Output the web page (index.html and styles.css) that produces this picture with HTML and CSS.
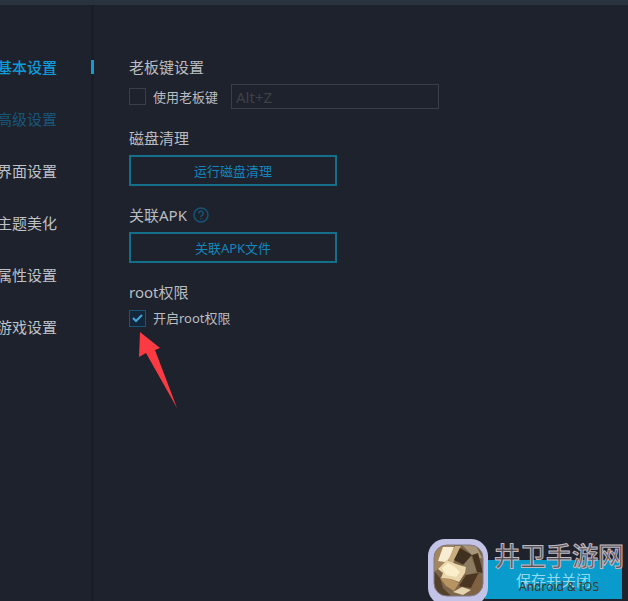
FILE: index.html
```html
<!DOCTYPE html>
<html lang="zh-CN">
<head>
<meta charset="utf-8">
<title>基本设置</title>
<link rel="stylesheet" href="styles.css">
</head>
<body>
<header class="titlebar"></header>
<div class="window">
  <nav class="sidebar">
    <a class="item active" href="#basic">基本设置</a>
    <a class="item hover" href="#advanced">高级设置</a>
    <a class="item" href="#interface">界面设置</a>
    <a class="item" href="#theme">主题美化</a>
    <a class="item" href="#property">属性设置</a>
    <a class="item" href="#game">游戏设置</a>
  </nav>
  <main class="content">
    <section class="group">
      <h2>老板键设置</h2>
      <div class="row">
        <input class="check" type="checkbox" id="boss">
        <label for="boss">使用老板键</label>
        <input class="hotkey" type="text" placeholder="Alt+Z" aria-label="老板键">
      </div>
    </section>
    <section class="group">
      <h2>磁盘清理</h2>
      <button class="action" type="button">运行磁盘清理</button>
    </section>
    <section class="group">
      <h2>关联APK
        <svg class="help" viewBox="0 0 16 16" aria-hidden="true"><circle cx="8" cy="8" r="7"/><path d="M5.8 6.4a2.2 2.2 0 1 1 3.5 1.7Q8 9 8 10M8 11.3v1.1"/></svg>
      </h2>
      <button class="action" type="button">关联APK文件</button>
    </section>
    <section class="group">
      <h2>root权限</h2>
      <div class="row">
        <input class="check" type="checkbox" id="root" checked>
        <label for="root">开启root权限</label>
        <svg class="arrow" viewBox="0 0 38 76" aria-hidden="true"><path d="M1 0 21 16 16 18 38 76 7 21 0 25Z"/></svg>
      </div>
    </section>
    <footer class="footer"><button class="save" type="button">保存并关闭</button></footer>
  </main>
</div>
<aside class="watermark">
  <svg class="gem" viewBox="0 0 60 62" aria-hidden="true">
    <defs><clipPath id="face"><rect x="6" y="6" width="49" height="51" rx="13"/></clipPath></defs>
    <rect x="0" y="0" width="60" height="66" rx="17" fill="#c3c3e8"/>
    <g clip-path="url(#face)">
      <path fill="#7c6548" d="M0 0h60v62H0z"/>
      <path fill="#a5855c" d="M5 4h22l-7 18-9 7-6 5z"/>
      <path fill="#f7ecd2" d="M15 8h11l-4 11-5 4-7-1z"/>
      <path fill="#c9ad7e" d="m27 7 6 0-8 17-5-3z"/>
      <path fill="#40301f" d="m32 9 12 7-8 10-10-5z"/>
      <path fill="#a8967a" d="M33 5h14l8 15-11-4z"/>
      <path fill="#8c7a61" d="m43 17 6 16-11 3-3-10z"/>
      <path fill="#46331f" d="m44 16 6-2 5 20-6-1z"/>
      <path fill="#4a3520" d="m38 36 13-2-8 15-12-2z"/>
      <path fill="#54402a" d="m6 32 6 7 3 10 8 8H6z"/>
      <path fill="#b79461" d="m12 39 11 1 8 4-5 8-8-5z"/>
      <path fill="#e9d6ab" d="m10 30 9-9 9 4 10 3-1 6-6 9-8-3-10-1 2-5z"/>
      <path fill="#fbeecb" d="m14 29 6-5 7 4 5 5-4 5-10-2z"/>
      <path fill="#e4d3ad" d="m25 53 9-5 9 3-8 5z"/>
      <path fill="#806141" d="m43 49 7-14 5 3v16l-10 2z"/>
    </g>
    <rect x="6" y="6" width="49" height="51" rx="13" fill="none" stroke="#827b82"/>
  </svg>
  <div class="brand"><strong>井卫手游网</strong><span>Android &amp; IOS</span></div>
</aside>
</body>
</html>
```

FILE: styles.css
```css
* { box-sizing: border-box; }
body {
  display: flex;
  flex-direction: column;
  min-height: 100vh;
  margin: 0;
  overflow: hidden;
  position: relative;
  background: #1e222c;
  color: #b9bcc1;
  font: 13px/18px "Noto Sans", "Noto Sans CJK SC", sans-serif;
}
button, input { font: inherit; }
.titlebar { height: 5px; background: #29333e; }
.window { display: flex; flex: 1; }
.sidebar {
  display: flex;
  flex-direction: column;
  gap: 32px;
  width: 94px;
  padding-top: 52px;
  border-right: 3px solid #191d26;
}
.item {
  margin: 0 -3px;
  color: #bec1c6;
  font-size: 15px;
  line-height: 20px;
  text-decoration: none;
  white-space: nowrap;
}
.item.active {
  background: linear-gradient(#159bd3, #159bd3) right center / 3px 14px no-repeat;
  color: #0e9bd9;
  font-weight: 500;
}
.item.hover { color: #17577b; }
.content {
  display: flex;
  flex: 1;
  flex-direction: column;
  gap: 19px;
  padding: 52px 6px 2px 35px;
}
.group { display: grid; justify-items: start; gap: 7px; }
h2 {
  display: flex;
  align-items: center;
  gap: 6px;
  margin: 0;
  font-size: 15px;
  font-weight: 400;
  line-height: 20px;
}
.row { display: flex; align-items: center; position: relative; }
.check {
  appearance: none;
  width: 17px;
  height: 17px;
  margin: 0 7px 0 0;
  border: 1px solid #3a3e46;
}
.check:checked {
  border-color: #1b5474;
  background: #13273c url("data:image/svg+xml,%3Csvg xmlns='http://www.w3.org/2000/svg' viewBox='0 0 15 15'%3E%3Cpath d='M3 7l3 3 6-6' fill='none' stroke='%2345a5d8' stroke-width='2'/%3E%3C/svg%3E");
}
.hotkey {
  width: 208px;
  height: 25px;
  margin-left: 13px;
  padding: 0 4px;
  border: 1px solid #3a3e46;
  background: none;
  color: #b9bcc1;
  font-size: 15px;
}
.hotkey::placeholder { color: #3d4149; opacity: 1; }
.action {
  width: 208px;
  height: 31px;
  padding: 0;
  border: 2px solid #136f8a;
  background: none;
  color: #1585bd;
}
.help { width: 16px; height: 16px; fill: none; stroke: #175477; stroke-width: 1.5; }
.arrow {
  position: absolute;
  top: 23px;
  left: 10px;
  width: 38px;
  height: 76px;
  fill: #fb3b41;
}
.footer { display: flex; justify-content: flex-end; margin-top: auto; }
.save {
  width: 137px;
  height: 39px;
  padding: 0;
  border: 0;
  background: #089bcb;
  color: #8fdcf2;
  font-size: 15px;
}
.watermark {
  display: flex;
  gap: 6px;
  position: absolute;
  right: 4px;
  bottom: 0;
  pointer-events: none;
}
.gem { width: 60px; height: 62px; }
.brand { display: flex; flex-direction: column; align-items: center; }
.brand strong {
  color: #55565e;
  font-size: 26px;
  font-weight: 500;
  line-height: 34px;
  -webkit-text-stroke: 1px #c3b8be;
}
.brand span { color: #3c3c2c; font-size: 12px; line-height: 28px; }
```
